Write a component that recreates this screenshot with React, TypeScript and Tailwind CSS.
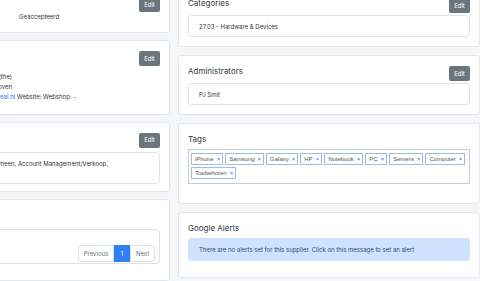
import React from 'react';

const tags = ['iPhone', 'Samsung', 'Galaxy', 'HP', 'Notebook', 'PC', 'Servers', 'Computer', 'Toebehoren'];

const EditButton: React.FC = () => (
  <button className="mt-[1px] h-[15px] w-[21px] rounded-[2px] bg-[#6c757d] text-[6px] leading-none text-white">
    Edit
  </button>
);

const Card: React.FC<{ title?: string; edit?: boolean; className?: string; children: React.ReactNode }> = ({
  title,
  edit,
  className = '',
  children,
}) => (
  <div className={`rounded-[3px] border border-[#e3e6ea] bg-white p-[9px] ${className}`}>
    <div className={`flex items-start justify-between ${edit ? 'h-[16px] mb-[2px]' : 'h-[12px] mb-[4px]'}`}>
      <h3 className="text-[8px] leading-[12px] text-[#343a40]">{title}</h3>
      {edit && <EditButton />}
    </div>
    {children}
  </div>
);

export default function App() {
  return (
    <div
      className="flex h-[281px] w-[480px] gap-[8px] overflow-hidden bg-[#f5f6f8]"
      style={{ fontFamily: 'Inter, "Liberation Sans", sans-serif' }}
    >
      {/* left column, cropped on the left */}
      <div className="-mt-[14px] flex w-[170px] shrink-0 flex-col gap-[7px]">
        <div className="-ml-[10px] rounded-[3px] border border-[#e3e6ea] bg-white px-[9px] pt-[9px] pb-[10px]">
          <div className="flex h-[16px] justify-end">
            <EditButton />
          </div>
          <div className="ml-[19px] text-[6px] leading-[10px] text-[#333]">Geaccepteerd</div>
        </div>

        <div className="-ml-[10px] h-[82px] rounded-[3px] border border-[#e3e6ea] bg-white px-[9px] pt-[9px]">
          <div className="flex h-[16px] justify-end">
            <EditButton />
          </div>
          <div className="mt-[6px] whitespace-nowrap text-[6px] leading-[10px] text-[#333]">
            <div className="flex w-[12px] justify-end">Nederland (the)</div>
            <div className="flex w-[12px] justify-end">Kraaijenhoven</div>
            <div className="flex w-[76px] justify-end">
              <span className="text-[#1a73e8]">info@ideal.nl</span>
              <span>&nbsp;Website: Webshop: -</span>
            </div>
          </div>
        </div>

        <div className="-ml-[10px] h-[77px] rounded-[3px] border border-[#e3e6ea] bg-white px-[9px] pt-[9px]">
          <div className="mb-[4px] flex h-[16px] justify-end">
            <EditButton />
          </div>
          <div className="-ml-[20px] h-[32px] rounded-[4px] border border-[#dee2e6] pt-[6px] whitespace-nowrap text-[6px] leading-[10px] text-[#333]">
            <div className="flex w-[127px] justify-end">Algemeen, Account Management/Verkoop,</div>
          </div>
        </div>

        <div className="-ml-[10px] h-[90px] rounded-[3px] border border-[#e3e6ea] bg-white px-[9px] pt-[9px]">
          <div className="mb-[4px] h-[16px]" />
          <div className="-ml-[20px] flex justify-end rounded-[4px] border border-[#dee2e6] pt-[15px] pr-[4px] pb-[1px]">
            <div className="flex h-[17px] text-[6px] text-[#6c757d]">
              <span className="flex w-[36px] items-center justify-center rounded-l-[3px] border border-[#dee2e6]">
                Previous
              </span>
              <span className="flex w-[16px] items-center justify-center bg-[#2f80f5] text-white">1</span>
              <span className="flex w-[25px] items-center justify-center rounded-r-[3px] border border-[#dee2e6]">
                Next
              </span>
            </div>
          </div>
        </div>
      </div>

      {/* right column */}
      <div className="-mt-[13px] flex w-[302px] shrink-0 flex-col gap-[8px]">
        <Card title="Categories" edit>
          <div className="flex h-[22px] items-center rounded-[4px] border border-[#dee2e6] pl-[10px] text-[6px] text-[#333]">
            27.03 - Hardware &amp; Devices
          </div>
        </Card>

        <Card title="Administrators" edit>
          <div className="flex h-[22px] items-center rounded-[4px] border border-[#dee2e6] pl-[10px] text-[6px] text-[#333]">
            PJ Smit
          </div>
        </Card>

        <Card title="Tags" className="pb-[19px]">
          <div
            className="flex flex-wrap gap-x-[2px] gap-y-[2px] border border-[#cccccc] px-[2px] pt-[3px] pb-[4px]"
            style={{ fontFamily: '"Liberation Sans", Arial, sans-serif' }}
          >
            {tags.map((t) => (
              <span
                key={t}
                className="flex h-[12px] items-center border border-[#9dbbec] bg-white pl-[3px] pr-[2px] text-[6px] text-[#555]"
              >
                {t}
                <span className="ml-[3px] text-[6px] text-[#2f6fd6]">×</span>
              </span>
            ))}
          </div>
        </Card>

        <Card title="Google Alerts" className="pb-[16px]">
          <div className="flex h-[23px] items-center rounded-[3px] bg-[#cfe2ff] pl-[11px] text-[6px] text-[#2b4c7e]">
            There are no alerts set for this supplier. Click on this message to set an alert
          </div>
        </Card>
      </div>
    </div>
  );
}
